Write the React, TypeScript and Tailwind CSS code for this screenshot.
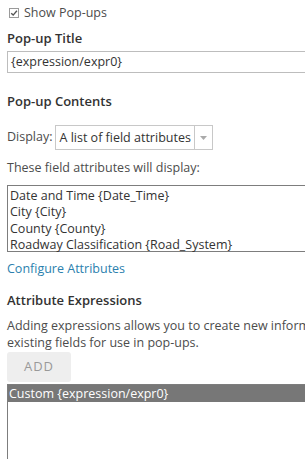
export default function App() {
  const campos = [
    "Date and Time {Date_Time}",
    "City {City}",
    "County {County}",
    "Roadway Classification {Road_System}",
  ];

  return (
    <div className="h-[459px] w-[305px] overflow-hidden bg-white font-['Open_Sans',sans-serif] text-[12.5px] text-[#4c4c4c]">
      <div className="w-[380px] pl-[7px] pt-[4px]">
        <label className="flex h-[18px] items-center gap-[5px]">
          <span className="ml-[2px] flex h-[10px] w-[10px] items-center justify-center border border-[#9a9a9a] bg-white">
            <svg width="8" height="8" viewBox="0 0 8 8">
              <path d="M1.2 4.2 L3.2 6.1 L6.9 1.8" fill="none" stroke="#555" strokeWidth="1.4" />
            </svg>
          </span>
          <span className="leading-[18px]">Show Pop-ups</span>
        </label>

        <h3 className="mt-[7px] text-[13px] font-semibold leading-[18px] text-[#323232]">Pop-up Title</h3>
        <div className="mt-[4px] h-[22px] w-[360px] border border-[#bdbdbd] px-[3px] leading-[20px] text-[#333]">
          {"{expression/expr0}"}
        </div>

        <h3 className="mt-[19px] text-[13px] font-semibold leading-[18px] text-[#323232]">Pop-up Contents</h3>

        <div className="mt-[15px] flex items-center gap-[3px]">
          <span>Display:</span>
          <div className="flex h-[25px] items-stretch border border-[#c8c8c8]">
            <span className="px-[3px] leading-[23px] text-[#333]">A list of field attributes</span>
            <span className="flex w-[18px] items-center justify-center border-l border-[#c8c8c8]">
              <svg width="7" height="4" viewBox="0 0 7 4">
                <path d="M0 0 L7 0 L3.5 4 Z" fill="#aaa" />
              </svg>
            </span>
          </div>
        </div>

        <p className="mt-[9px] leading-[18px]">These field attributes will display:</p>
        <div className="mt-[8px] h-[67px] w-[360px] border border-[#7d7d7d] px-[2px] pt-[2px] text-[#333]">
          {campos.map((c) => (
            <div key={c} className="leading-[16.4px]">{c}</div>
          ))}
        </div>

        <a className="mt-[8px] block leading-[18px] text-[#2b7fae]">Configure Attributes</a>

        <h3 className="mt-[13px] text-[13px] font-semibold leading-[18px] text-[#323232]">Attribute Expressions</h3>
        <p className="mt-[8px] w-[370px] leading-[17px]">
          Adding expressions allows you to create new information from existing fields for use in pop-ups.
        </p>

        <button className="mt-[1px] h-[30px] w-[64px] rounded-[3px] bg-[#eeeeee] text-[13px] tracking-[1px] text-[#999]">
          ADD
        </button>

        <div className="mt-[2px] h-[80px] w-[360px] border-l border-t border-[#7d7d7d]">
          <div className="bg-[#777777] px-[1px] leading-[17px] text-white">{"Custom {expression/expr0}"}</div>
        </div>
      </div>
    </div>
  );
}
